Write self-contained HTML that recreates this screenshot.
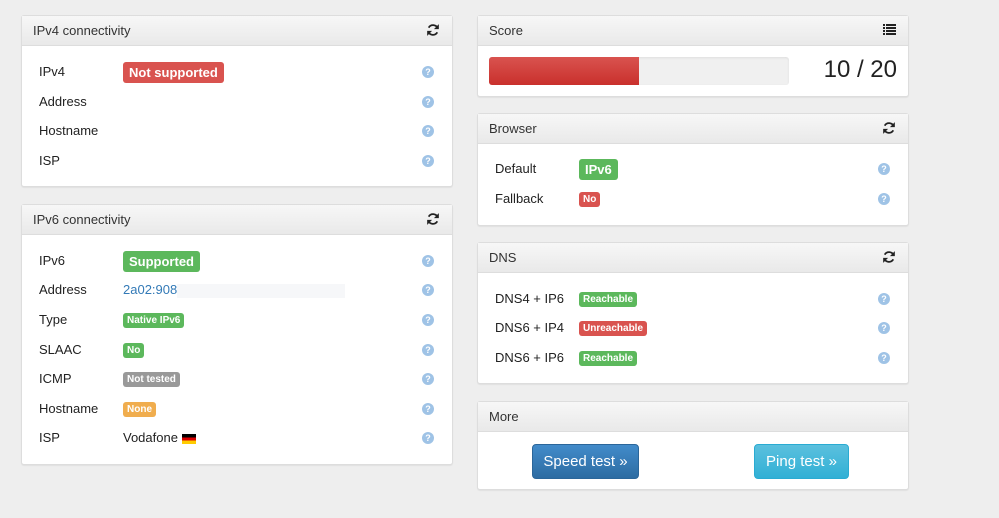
<!DOCTYPE html>
<html><head><meta charset="utf-8"><style>
*{box-sizing:border-box;margin:0;padding:0}
body{width:999px;height:518px;background:#eeeeee;font-family:"Liberation Sans",sans-serif;font-size:13px;color:#222;position:relative;overflow:hidden}
.p{position:absolute;background:#fff;border:1px solid #ddd;border-radius:3px;box-shadow:0 1px 1px rgba(0,0,0,.06)}
.h{position:absolute;left:0;right:0;top:0;height:30px;background:linear-gradient(#f7f7f7,#e9e9e9);border-bottom:1px solid #ddd;padding:7px 11px;font-size:13px;color:#333}
.ic{position:absolute;right:12px;top:7px}
.r{position:absolute;left:17px;right:0;height:20px;line-height:20px}
.v{position:absolute;left:84px;top:0}
.q{position:absolute;right:18px;top:4px;width:12px;height:12px;border-radius:50%;background:#9fc3e6;color:#fff;font-size:9px;line-height:12px;text-align:center;font-weight:bold}
.b{display:inline-block;color:#fff;font-weight:bold;border-radius:3px;vertical-align:middle}
.big{font-size:13px;padding:2px 6px;line-height:17px}
.sm{font-size:10px;padding:1px 4px;line-height:13px}
.g{background:#5cb85c}.rd{background:#d9534f}.gr{background:#999}.o{background:#f0ad4e}
</style></head><body>
<svg width="0" height="0" style="position:absolute"><defs>
<symbol id="rf" viewBox="0 0 12 12"><path d="M10 4.5A4.3 4.3 0 0 0 2.3 4M2 7.5a4.3 4.3 0 0 0 7.7.5" fill="none" stroke="#222" stroke-width="1.5"/><path d="M11 1v4.2H6.8zM1 11V6.8h4.2z" fill="#222"/></symbol>
</defs></svg>

<div class="p" style="left:21px;top:15px;width:432px;height:172px">
<div class="h">IPv4 connectivity<svg class="ic" width="14" height="14"><use href="#rf"/></svg></div>
<div class="r" style="top:46px">IPv4<span class="v"><span class="b big rd">Not supported</span></span><span class="q">?</span></div>
<div class="r" style="top:76px">Address<span class="q">?</span></div>
<div class="r" style="top:105px">Hostname<span class="q">?</span></div>
<div class="r" style="top:135px">ISP<span class="q">?</span></div>
</div>

<div class="p" style="left:21px;top:204px;width:432px;height:261px">
<div class="h">IPv6 connectivity<svg class="ic" width="14" height="14"><use href="#rf"/></svg></div>
<div class="r" style="top:46px">IPv6<span class="v"><span class="b big g">Supported</span></span><span class="q">?</span></div>
<div class="r" style="top:75px">Address<span class="v" style="color:#337ab7">2a02:908<span style="display:inline-block;width:168px;height:14px;background:#f6f7f9;vertical-align:middle"></span></span><span class="q">?</span></div>
<div class="r" style="top:105px">Type<span class="v"><span class="b sm g">Native IPv6</span></span><span class="q">?</span></div>
<div class="r" style="top:135px">SLAAC<span class="v"><span class="b sm g">No</span></span><span class="q">?</span></div>
<div class="r" style="top:164px">ICMP<span class="v"><span class="b sm gr">Not tested</span></span><span class="q">?</span></div>
<div class="r" style="top:194px">Hostname<span class="v"><span class="b sm o">None</span></span><span class="q">?</span></div>
<div class="r" style="top:223px">ISP<span class="v">Vodafone <span style="display:inline-block;width:14px;height:10px;vertical-align:middle;background:linear-gradient(#000 33%,#d00 33%,#d00 66%,#fc0 66%)"></span></span><span class="q">?</span></div>
</div>

<div class="p" style="left:477px;top:15px;width:432px;height:82px">
<div class="h">Score<svg class="ic" width="13" height="13" viewBox="0 0 13 13"><g fill="#222"><rect x="0" y="1" width="2" height="2"/><rect x="3" y="1" width="10" height="2"/><rect x="0" y="4" width="2" height="2"/><rect x="3" y="4" width="10" height="2"/><rect x="0" y="7" width="2" height="2"/><rect x="3" y="7" width="10" height="2"/><rect x="0" y="10" width="2" height="2"/><rect x="3" y="10" width="10" height="2"/></g></svg></div>
<div style="position:absolute;left:11px;top:41px;width:300px;height:28px;background:#f0f0f0;border-radius:3px;overflow:hidden;box-shadow:inset 0 1px 2px rgba(0,0,0,.08)"><div style="width:150px;height:100%;background:linear-gradient(#d9534f,#c9302c)"></div></div>
<div style="position:absolute;right:11px;top:40px;font-size:24px;color:#222">10 / 20</div>
</div>

<div class="p" style="left:477px;top:113px;width:432px;height:113px">
<div class="h">Browser<svg class="ic" width="14" height="14"><use href="#rf"/></svg></div>
<div class="r" style="top:45px">Default<span class="v"><span class="b big g">IPv6</span></span><span class="q">?</span></div>
<div class="r" style="top:75px">Fallback<span class="v"><span class="b sm rd">No</span></span><span class="q">?</span></div>
</div>

<div class="p" style="left:477px;top:242px;width:432px;height:142px">
<div class="h">DNS<svg class="ic" width="14" height="14"><use href="#rf"/></svg></div>
<div class="r" style="top:46px">DNS4 + IP6<span class="v"><span class="b sm g">Reachable</span></span><span class="q">?</span></div>
<div class="r" style="top:75px">DNS6 + IP4<span class="v"><span class="b sm rd">Unreachable</span></span><span class="q">?</span></div>
<div class="r" style="top:105px">DNS6 + IP6<span class="v"><span class="b sm g">Reachable</span></span><span class="q">?</span></div>
</div>

<div class="p" style="left:477px;top:401px;width:432px;height:89px">
<div class="h">More</div>
<div style="position:absolute;left:54px;top:42px;width:107px;height:35px;border-radius:4px;background:linear-gradient(#428bca,#2d6ca2);border:1px solid #2b669a;color:#fff;font-size:15px;line-height:33px;text-align:center">Speed test »</div>
<div style="position:absolute;left:276px;top:42px;width:95px;height:35px;border-radius:4px;background:linear-gradient(#5bc0de,#31b0d5);border:1px solid #2aabd2;color:#fff;font-size:15px;line-height:33px;text-align:center">Ping test »</div>
</div>
</body></html>
